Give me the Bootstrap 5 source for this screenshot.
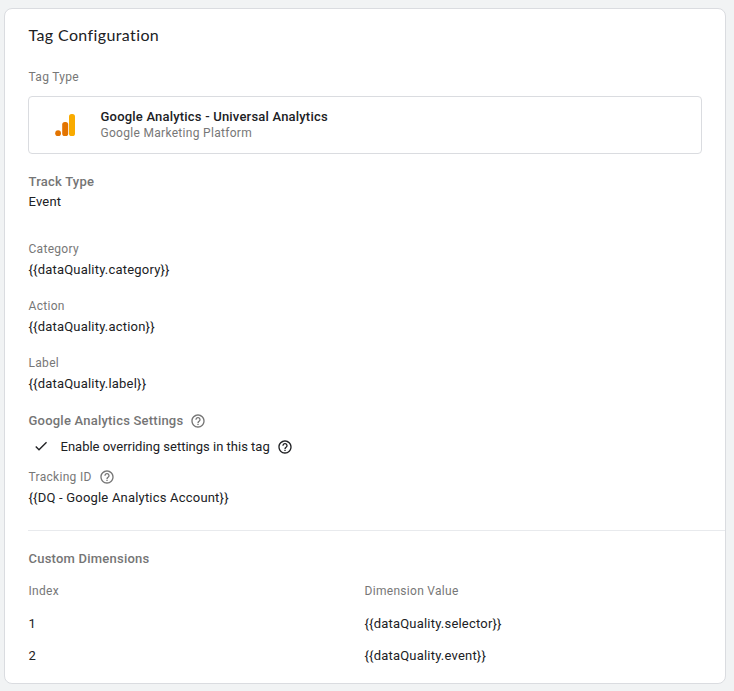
<!DOCTYPE html>
<html lang="en">
<head>
<meta charset="utf-8">
<title>Tag Configuration</title>
<link href="https://cdn.jsdelivr.net/npm/bootstrap@5.3.0/dist/css/bootstrap.min.css" rel="stylesheet">
<style>
body{background:#f1f3f4;font-family:Roboto,sans-serif;font-size:13px;line-height:20px;color:#202124}
.tag-card{width:722px;height:676px;margin:8px 0 0 4px;padding:14px 0 0 23.5px;border:1px solid #dadce0;border-radius:8px;color:#202124}
.tag-title{font-family:Lato,sans-serif;font-size:16px;line-height:24px;font-weight:400;letter-spacing:.38px;margin:0 0 22px}
.lbl{font-size:12px;line-height:16px;letter-spacing:.3px;color:#777}
.sec{font-size:13px;line-height:16px;font-weight:500;letter-spacing:.22px;color:#757575}
.val{line-height:20px;letter-spacing:.2px}
.type-box{height:58px;width:674px;margin:11px 0 20px -.5px;border:1px solid #dadce0;border-radius:4px;padding-left:24px}
.type-box .logo{margin-right:23.5px}
.type-name{line-height:16px;font-weight:500;letter-spacing:.2px}
.track-val{margin:2px 0 29px}
.fld{margin-bottom:18px}
.fld .val,.id-val{margin-top:3px}
.settings-head{margin-top:19px}
.override{margin:8px 0 12px 4px}
.tick{margin:-2px 12px 0 0}
.help-icon{width:16px;height:16px;margin-left:7.5px}
.settings-head .help-icon{margin-left:7px}
.split{height:1px;background:#e8eaed;margin:22px 0 20px -.5px}
.dims{margin-top:16px}
.row-one{margin-top:15px}
.row-two{margin-top:12px}
.c1{width:336px}
</style>
</head>
<body>
<svg class="d-none"><symbol id="help" viewBox="0 0 24 24"><path d="M11 18h2v-2h-2v2zm1-16C6.480 2 2 6.480 2 12s4.480 10 10 10 10-4.480 10-10S17.520 2 12 2zm0 18c-4.410 0-8-3.590-8-8s3.590-8 8-8 8 3.590 8 8-3.590 8-8 8zm0-14c-2.210 0-4 1.790-4 4h2c0-1.100.9-2 2-2s2 .9 2 2c0 2-3 1.750-3 5h2c0-2.250 3-2.500 3-5 0-2.210-1.790-4-4-4z" fill="currentColor"/></symbol></svg>
<main class="card tag-card">
  <h1 class="tag-title">Tag Configuration</h1>
  <div class="lbl">Tag Type</div>
  <div class="type-box d-flex align-items-center">
    <svg class="logo" width="24" height="24" viewBox="0 0 24 24"><rect x="16" y="1" width="6" height="22" rx="2.600" fill="#f9ab00"/><rect x="9.200" y="9" width="6" height="14" rx="2.600" fill="#e37400"/><circle cx="5.100" cy="20.200" r="2.900" fill="#e37400"/></svg>
    <div>
      <div class="type-name">Google Analytics - Universal Analytics</div>
      <div class="lbl">Google Marketing Platform</div>
    </div>
  </div>
  <div class="sec">Track Type</div>
  <div class="val track-val">Event</div>
  <div class="fld"><div class="lbl">Category</div><div class="val">{{dataQuality.category}}</div></div>
  <div class="fld"><div class="lbl">Action</div><div class="val">{{dataQuality.action}}</div></div>
  <div class="fld mb-0"><div class="lbl">Label</div><div class="val">{{dataQuality.label}}</div></div>
  <div class="sec settings-head d-flex"><span>Google Analytics Settings</span><svg class="help-icon"><use href="#help"/></svg></div>
  <div class="override d-flex align-items-center"><svg class="tick" width="16" height="16" viewBox="0 0 24 24"><path d="M9 16.170 4.830 12l-1.420 1.410L9 19 21 7l-1.410-1.410z" fill="currentColor"/></svg><span>Enable overriding settings in this tag</span><svg class="help-icon"><use href="#help"/></svg></div>
  <div class="lbl d-flex"><span>Tracking ID</span><svg class="help-icon"><use href="#help"/></svg></div>
  <div class="val id-val">{{DQ - Google Analytics Account}}</div>
  <div class="split"></div>
  <div class="sec">Custom Dimensions</div>
  <div class="dims d-flex lbl"><div class="c1">Index</div><div>Dimension Value</div></div>
  <div class="row-one d-flex val"><div class="c1">1</div><div>{{dataQuality.selector}}</div></div>
  <div class="row-two d-flex val"><div class="c1">2</div><div>{{dataQuality.event}}</div></div>
</main>
<script src="https://cdn.jsdelivr.net/npm/bootstrap@5.3.0/dist/js/bootstrap.bundle.min.js"></script>
</body>
</html>
